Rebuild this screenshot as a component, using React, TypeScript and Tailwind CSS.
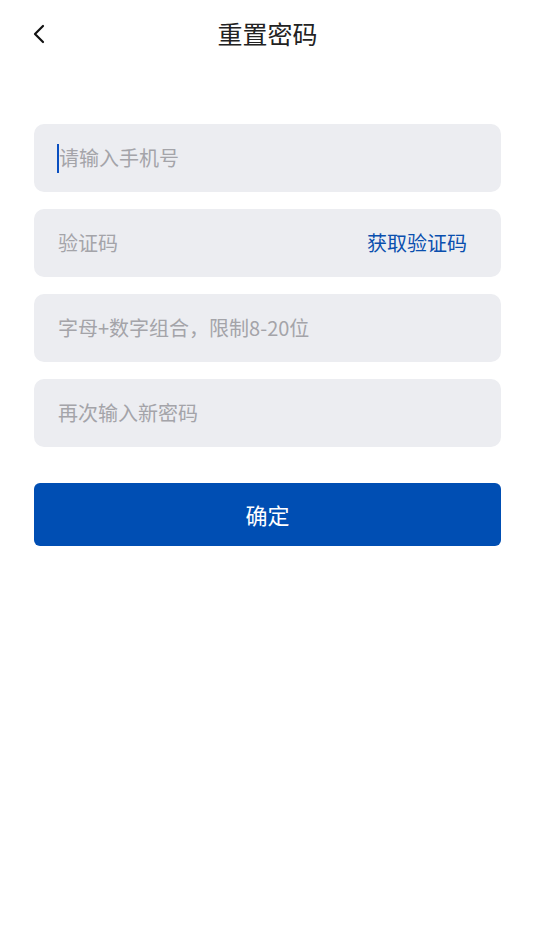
import { useState } from "react";

const BackIcon = () => (
  <svg
    className="w-[14px] h-[20px]"
    viewBox="0 0 14 20"
    fill="none"
    stroke="currentColor"
    strokeWidth="2.2"
    strokeLinecap="round"
    strokeLinejoin="round"
  >
    <polyline points="11,2 3,10 11,18" />
  </svg>
);

export default function App() {
  const [code, setCode] = useState("");
  const [pwd, setPwd] = useState("");
  const [pwd2, setPwd2] = useState("");

  const field =
    "h-[68px] w-full rounded-[10px] bg-[#ecedf1] flex items-center pl-[24px] pr-[34px] text-[20px]";
  const input =
    "flex-1 min-w-0 bg-transparent outline-none text-[#222] placeholder:text-[#a4a4a9]";

  return (
    <div
      className="min-h-screen bg-white"
      style={{ fontFamily: '"Noto Sans CJK SC", "Noto Sans", sans-serif' }}
    >
      <div className="h-[68px] grid grid-cols-[1fr_auto_1fr] items-center px-[32px]">
        <button className="text-[#111] flex items-center justify-self-start">
          <BackIcon />
        </button>
        <h1 className="text-[25px] text-[#222] pb-[1px]">重置密码</h1>
        <div />
      </div>

      <div className="px-[34px] pt-[56px] flex flex-col gap-[17px]">
        <div className={field}>
          <span className="w-[2px] h-[29px] bg-[#0a4fc0] -ml-[1px]" />
          <span className="text-[#a4a4a9]">请输入手机号</span>
        </div>

        <div className={field}>
          <input
            value={code}
            onChange={(e) => setCode(e.target.value)}
            placeholder="验证码"
            className={input}
          />
          <button className="text-[#0a4fae] text-[20px]">获取验证码</button>
        </div>

        <div className={field}>
          <input
            type="password"
            value={pwd}
            onChange={(e) => setPwd(e.target.value)}
            placeholder="字母+数字组合，限制8-20位"
            className={input}
          />
        </div>

        <div className={field}>
          <input
            type="password"
            value={pwd2}
            onChange={(e) => setPwd2(e.target.value)}
            placeholder="再次输入新密码"
            className={input}
          />
        </div>

        <button className="mt-[19px] h-[63px] w-full rounded-[6px] bg-[#004eb3] text-white text-[22px]">
          确定
        </button>
      </div>
    </div>
  );
}
